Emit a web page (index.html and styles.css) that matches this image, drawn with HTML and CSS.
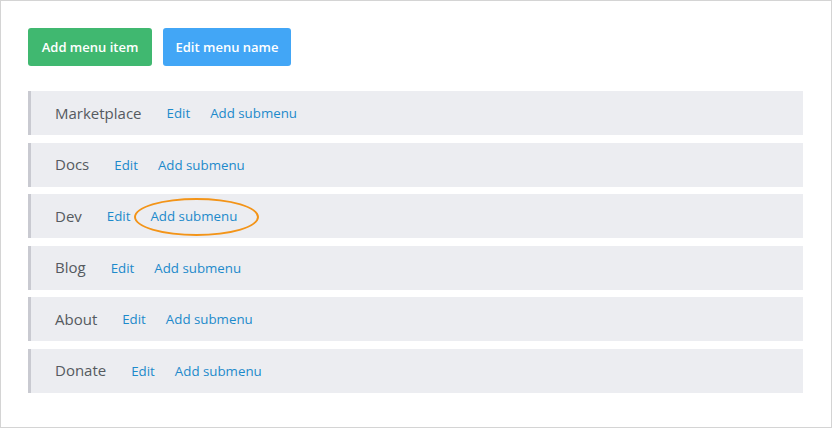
FILE: index.html
```html
<!DOCTYPE html>
<html>
<head>
<meta charset="utf-8">
<link rel="stylesheet" href="styles.css">
</head>
<body>
<div class="page">
  <div class="actions">
    <button class="btn btn-green">Add menu item</button>
    <button class="btn btn-blue">Edit menu name</button>
  </div>
  <ul class="menu">
    <li class="row"><span class="label">Marketplace</span><a class="link">Edit</a><a class="link">Add submenu</a></li>
    <li class="row"><span class="label">Docs</span><a class="link">Edit</a><a class="link">Add submenu</a></li>
    <li class="row"><span class="label">Dev</span><a class="link">Edit</a><a class="link highlight">Add submenu<span class="ring"></span></a></li>
    <li class="row"><span class="label">Blog</span><a class="link">Edit</a><a class="link">Add submenu</a></li>
    <li class="row"><span class="label">About</span><a class="link">Edit</a><a class="link">Add submenu</a></li>
    <li class="row"><span class="label">Donate</span><a class="link">Edit</a><a class="link">Add submenu</a></li>
  </ul>
</div>
</body>
</html>
```
FILE: styles.css
```css
* { box-sizing: border-box; }
html, body { margin: 0; padding: 0; background: #fff; }
body { font-family: "Open Sans", "Noto Sans", sans-serif; }
.page {
  width: 832px;
  height: 428px;
  border: 1px solid #d4d4d4;
  padding: 27px 28px 0 27px;
}
.actions {
  display: flex;
  gap: 11px;
}
.btn {
  height: 38px;
  border: none;
  border-radius: 3px;
  color: #fff;
  font-family: "Open Sans", sans-serif;
  font-weight: 600;
  font-size: 13px;
  padding: 0;
  white-space: nowrap;
  text-align: center;
}
.btn-green { background: #40b870; width: 124px; }
.btn-blue { background: #42a6f6; width: 128px; }
.menu {
  list-style: none;
  margin: 25px 0 0 0;
  padding: 0;
  display: flex;
  flex-direction: column;
  gap: 7.6px;
}
.row {
  height: 44px;
  background: #ecedf1;
  border-left: 3px solid #c9cad1;
  display: flex;
  align-items: center;
  padding-left: 24px;
  padding-bottom: 1px;
}
.label {
  font-size: 15px;
  color: #555a60;
  margin-right: 25px;
}
.link {
  font-size: 13.3px;
  color: #1d8acb;
  margin-right: 20px;
  position: relative;
  padding-top: 1px;
}
.ring {
  position: absolute;
  left: -16px;
  top: -8px;
  width: 125px;
  height: 38px;
  border: 2px solid #f39418;
  border-radius: 50%;
}
```
